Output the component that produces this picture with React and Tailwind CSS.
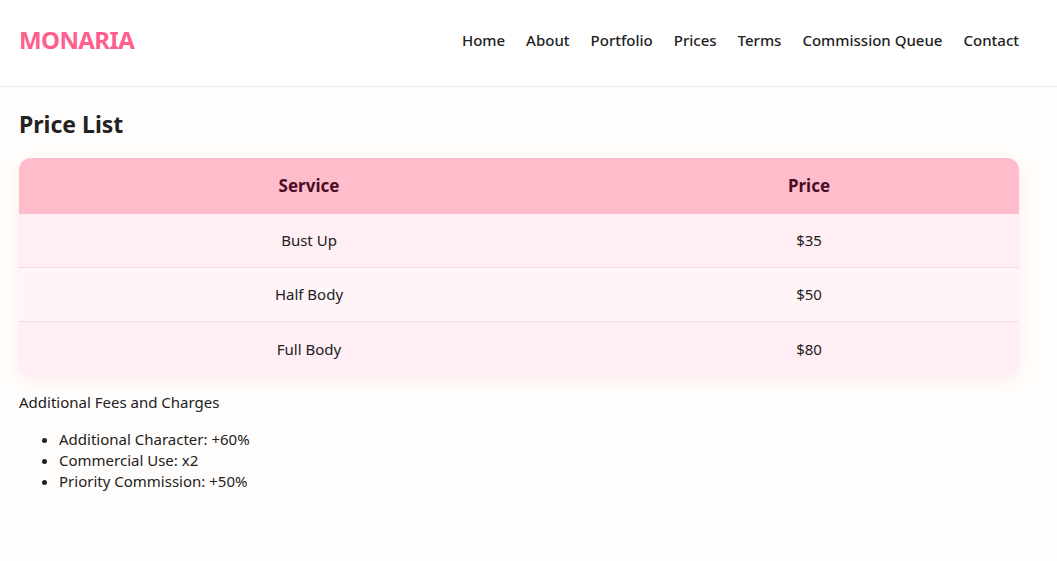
import React from "react";

const links = ["Home", "About", "Portfolio", "Prices", "Terms", "Commission Queue", "Contact"];

const prices = [
  { service: "Bust Up", price: "$35" },
  { service: "Half Body", price: "$50" },
  { service: "Full Body", price: "$80" },
];

const fees = ["Additional Character: +60%", "Commercial Use: x2", "Priority Commission: +50%"];

export default function App() {
  return (
    <div
      className="min-h-[561px] bg-[#fffdfb] text-[#222]"
      style={{ fontFamily: '"Noto Sans", "Open Sans", sans-serif' }}
    >
      <header className="h-[87px] pb-[6px] bg-white border-b border-[#eeebe8] flex items-center justify-between pl-[19px] pr-[38px]">
        <div className="text-[24px] font-bold text-[#ff5f8d] tracking-tight">MONARIA</div>
        <nav className="flex items-center gap-[21px] text-[15px] font-medium text-[#222]">
          {links.map((l) => (
            <a key={l} href="#" className="hover:text-[#ff5f8d]">
              {l}
            </a>
          ))}
        </nav>
      </header>

      <main className="pl-[19px] pt-[22px]">
        <h1 className="text-[23px] font-bold leading-[30px] text-[#222]">Price List</h1>

        <div className="mt-[19px] w-[1000px] rounded-[12px] overflow-hidden shadow-[0_4px_14px_rgba(255,160,180,0.18)]">
          <div className="grid grid-cols-[580px_420px] h-[56px] bg-[#ffbccb] items-center text-[17px] font-bold text-[#4a0d26]">
            <div className="text-center">Service</div>
            <div className="text-center">Price</div>
          </div>
          {prices.map((p, i) => (
            <div
              key={p.service}
              className={
                "grid grid-cols-[580px_420px] h-[54px] items-center text-[15px] text-[#222] " +
                (i % 2 === 1 ? "bg-[#fff4f8]" : "bg-[#ffeef4]") +
                (i < prices.length - 1 ? " border-b border-[#f5d9e2]" : "")
              }
            >
              <div className="text-center">{p.service}</div>
              <div className="text-center">{p.price}</div>
            </div>
          ))}
        </div>

        <p className="mt-[16px] text-[15px] leading-[21px]">Additional Fees and Charges</p>
        <ul className="mt-[16px] list-disc pl-[40px] text-[15px] leading-[21px]">
          {fees.map((f) => (
            <li key={f}>{f}</li>
          ))}
        </ul>
      </main>
    </div>
  );
}
